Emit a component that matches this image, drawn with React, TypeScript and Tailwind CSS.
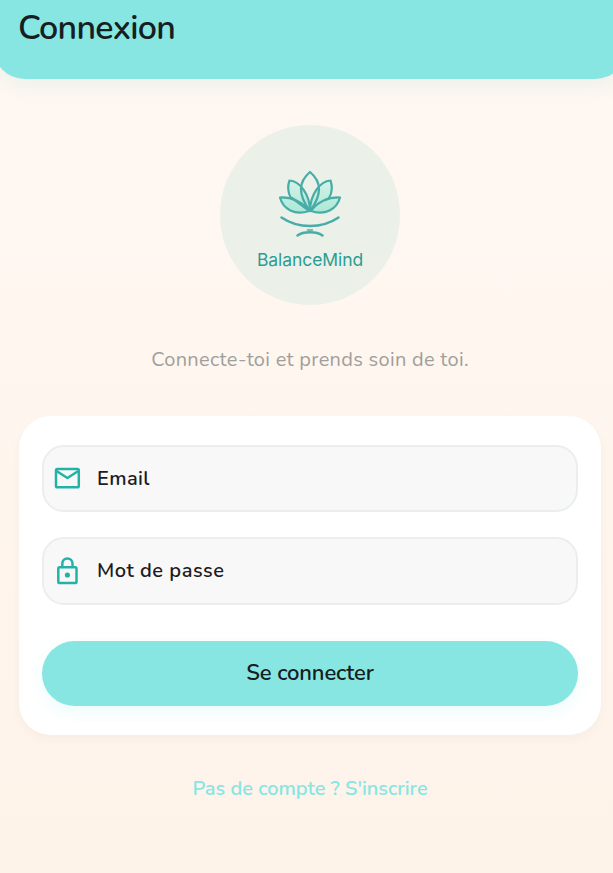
import React from "react";

function Lotus() {
  return (
    <svg className="h-[70px] w-[66px] shrink-0" viewBox="277 169 66 70" fill="none" stroke="#48aca7" strokeWidth="2.2" strokeLinecap="round" strokeLinejoin="round">
      <defs>
        <linearGradient id="petal" x1="0" y1="178" x2="0" y2="213" gradientUnits="userSpaceOnUse">
          <stop offset="0" stopColor="#d9f3e9" />
          <stop offset="1" stopColor="#aae8d5" />
        </linearGradient>
      </defs>
      <path fill="url(#petal)" stroke="none" d="M309 211C311 199 301 182 289.500 180.500C286 193 291 205 309 211Z" />
      <path fill="url(#petal)" stroke="none" d="M311 211C309 199 319 182 330.500 180.500C334 193 329 205 311 211Z" />
      <path fill="url(#petal)" d="M309 211C303 202 292 197 280 197.500C283 209 295 216 309 211Z" />
      <path fill="url(#petal)" d="M311 211C317 202 328 197 340 197.500C337 209 325 216 311 211Z" />
      <path fill="#ebf0e9" stroke="none" d="M310 172C298 182 301 190 310 199C319 190 322 182 310 172Z" />
      <path d="M291 198C287.500 192 287.500 186 289.500 180.500C300 181 310 195 310 211" />
      <path d="M329 198C332.500 192 332.500 186 330.500 180.500C320 181 310 195 310 211" />
      <path d="M310 172C298 182 298 195 310 211C322 195 322 182 310 172Z" />
      <path d="M292 198L308 210" />
      <path d="M281.500 217.500C298 228.800 322 228.800 338.500 217.500M297.500 235.500C303 231.200 317 231.200 322.500 235.500" strokeWidth="2.500" />
      <path d="M307.500 230H312.500" strokeWidth="1.500" />
    </svg>
  );
}

function MailIcon() {
  return (
    <svg className="h-[27px] w-[27px] shrink-0" viewBox="0 0 27 27" fill="none" stroke="#24b2a7" strokeWidth="2.500" strokeLinejoin="round">
      <rect x="2" y="4.100" width="22.800" height="18.200" rx="1.300" />
      <path d="M2.500 6L13.400 13L24.300 6" />
    </svg>
  );
}

function LockIcon() {
  return (
    <svg className="h-[30px] w-[27px] shrink-0" viewBox="0 0 27 30" fill="none" stroke="#24b2a7" strokeWidth="2.500">
      <rect x="4.300" y="11.200" width="18.200" height="15.800" rx="1.300" />
      <path d="M8.300 11.200V7.500a5.100 5.100 0 0 1 10.200 0v3.700" />
      <circle cx="13.400" cy="19" r="2.600" fill="#24b2a7" stroke="none" />
    </svg>
  );
}

export default function App() {
  return (
    <div className="h-[873px] w-[613px] overflow-hidden bg-linear-to-b from-[#fff8f3] to-[#fef3e9] font-['Nunito',Lato,sans-serif] text-[#1c1c1e]">
      <header className="-ml-[7px] h-[79px] w-[634px] rounded-b-[32px] bg-[#87e6e2] pl-[25px] pt-[8px] shadow-[0_8px_20px_rgba(38,166,154,0.080)]">
        <h1 className="w-max text-[34px] leading-[40px] font-semibold tracking-[-0.700px] text-[#14201f]">Connexion</h1>
      </header>
      <main className="ml-[19px] flex w-[582px] flex-col items-center">
        <div className="mt-[45.500px] flex h-[180px] w-[180px] flex-col items-center rounded-full bg-[#ebf0e9] pt-[44.500px]">
          <Lotus />
          <span className="mt-[10px] whitespace-nowrap font-['Inter',sans-serif] text-[17.500px] leading-[22px] tracking-[-0.070px] text-[#2b9d93]">BalanceMind</span>
        </div>
        <p className="mt-[41.500px] whitespace-nowrap text-[20px] leading-[28px] tracking-[0.300px] text-[#a09f9b]">Connecte-toi et prends soin de toi.</p>
        <form className="mt-[42px] flex h-[319px] w-full flex-col rounded-[32px] bg-white px-[23px] pt-[28.500px] shadow-[0_4px_10px_rgba(38,100,80,0.045)]">
          <label className="flex h-[67.500px] items-center gap-[16px] rounded-[22px] border-2 border-[#eaefee] bg-[#f8f8f8] pl-[10px] text-[20px] font-semibold">
            <MailIcon />
            <span className="pt-px tracking-[0.400px]">Email</span>
          </label>
          <label className="mt-[25px] flex h-[67.500px] items-center gap-[16px] rounded-[22px] border-2 border-[#eaefee] bg-[#f8f8f8] pl-[10px] text-[20px] font-semibold">
            <LockIcon />
            <span className="tracking-[0.500px]">Mot de passe</span>
          </label>
          <button type="button" className="mt-[36.500px] h-[65px] shrink-0 rounded-full bg-[#87e6e2] text-[22px] font-semibold tracking-[-0.150px] text-[#14201f] shadow-[0_6px_16px_rgba(135,230,226,0.150)]">Se connecter</button>
        </form>
        <a className="mt-[40px] whitespace-nowrap text-[20px] leading-[28px] font-semibold tracking-[-0.020px] text-[#87e6e2]">Pas de compte ? S'inscrire</a>
      </main>
    </div>
  );
}
